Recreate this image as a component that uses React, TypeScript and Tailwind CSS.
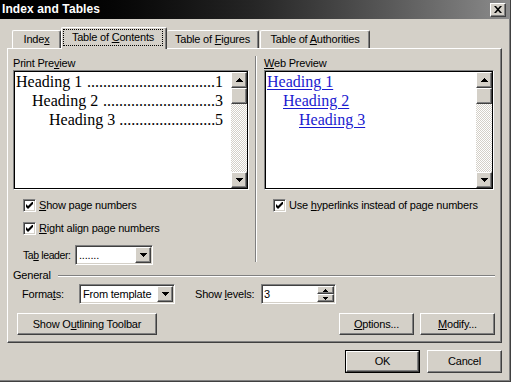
import React from 'react';

const raised =
  'bg-[#d4d0c8] border border-t-white border-l-white border-r-[#404040] border-b-[#404040] shadow-[inset_-1px_-1px_0_#808080]';
const sunken =
  'border border-t-[#808080] border-l-[#808080] border-r-white border-b-white shadow-[inset_1px_1px_0_#404040,inset_-1px_-1px_0_#d4d0c8]';
const frame =
  'border border-t-[#808080] border-l-[#808080] border-r-white border-b-white shadow-[inset_0_0_0_1px_#000]';
const checker = 'bg-[image:repeating-conic-gradient(#ffffff_0_25%,#d4d0c8_0_50%)] bg-[length:2px_2px]';

const Tri = ({ up, small }: { up?: boolean; small?: boolean }) => {
  const w = small ? 5 : 7;
  const h = small ? 3 : 4;
  let d = '';
  if (small) d = up ? 'M2 0h1v1h1v1h1v1h-5v-1h1v-1h1z' : 'M0 0h5v1h-1v1h-1v1h-1v-1h-1v-1h-1z';
  else d = up ? 'M3 0h1v1h1v1h1v1h1v1h-7v-1h1v-1h1v-1h1z' : 'M0 0h7v1h-1v1h-1v1h-1v1h-1v-1h-1v-1h-1v-1h-1z';
  return (
    <svg width={w} height={h} viewBox={`0 0 ${w} ${h}`} className="block" shapeRendering="crispEdges">
      <path d={d} fill="#000" />
    </svg>
  );
};

const ScrollBar = () => (
  <div className="w-[16px] h-full flex flex-col shrink-0">
    <div className={`${raised} h-[16px] flex items-center justify-center`}>
      <Tri up />
    </div>
    <div className={`${raised} h-[16px]`} />
    <div className={`flex-1 ${checker}`} />
    <div className={`${raised} h-[16px] flex items-center justify-center`}>
      <Tri />
    </div>
  </div>
);

const Check = () => (
  <span className={`${sunken} w-[13px] h-[13px] bg-white flex items-center justify-center shrink-0`}>
    <svg width="7" height="7" viewBox="0 0 7 7" className="block">
      <path d="M0 2L2 4L7 -1L7 2L2 7L0 5Z" fill="#000" />
    </svg>
  </span>
);

const CheckRow = ({ children, className = '' }: { children: React.ReactNode; className?: string }) => (
  <div className={`flex items-center h-[13px] ${className}`}>
    <Check />
    <span className="ml-[3px] whitespace-nowrap">{children}</span>
  </div>
);

const Combo = ({ width, value }: { width: string; value: string }) => (
  <div className={`${sunken} ${width} bg-white h-[20px] p-[1px] flex items-center shrink-0`}>
    <span className="flex-1 pl-[2px] whitespace-nowrap overflow-hidden">{value}</span>
    <span className={`${raised} w-[16px] h-full flex items-center justify-center shrink-0`}>
      <Tri />
    </span>
  </div>
);

const Button = ({ width, children }: { width: string; children: React.ReactNode }) => (
  <div className={`${raised} ${width} h-[22px] flex items-center justify-center whitespace-nowrap`}>{children}</div>
);

const TocLine = ({ indent, label, page, dots }: { indent: string; label: string; page: string; dots: number }) => (
  <div className={`flex h-[19px] leading-[19px] ${indent}`}>
    <span className="whitespace-pre">{label} </span>
    <span className="flex-1 min-w-0 text-right whitespace-nowrap">{'.'.repeat(dots)}</span>
    <span>{page}</span>
  </div>
);

const WebLine = ({ indent, label }: { indent: string; label: string }) => (
  <div className={`h-[19px] leading-[19px] ${indent}`}>
    <span className="text-[#1a1ad0] underline underline-offset-[2px]">{label}</span>
  </div>
);

export default function App() {
  return (
    <div className="w-[511px] h-[382px] bg-[#d4d0c8] border-r border-b border-[#404040] shadow-[inset_-1px_-1px_0_#808080] flex flex-col overflow-hidden font-['Liberation_Sans',Arial,sans-serif] text-[11px] leading-[13px] text-black">
      {/* title bar */}
      <div className="h-[19px] shrink-0 flex items-center justify-between bg-linear-to-r from-[#000000] via-[#262626] to-[#8c8c8c] pl-[2px] pr-[4px]">
        <span className="text-white font-bold text-[12px] tracking-[0.1px]">Index and Tables</span>
        <div className={`${raised} w-[16px] h-[14px] flex items-center justify-center`}>
          <svg width="8" height="7" viewBox="0 0 8 7" className="block">
            <path d="M0 0h2l2 2.3 2-2.3h2l-3 3.5 3 3.5h-2l-2-2.3-2 2.3h-2l3-3.5z" fill="#000" />
          </svg>
        </div>
      </div>

      <div className="tracking-[-0.2px] flex flex-col">
        {/* tabs */}
        <div className="mt-[8px] h-[21px] flex items-end">
          <div className="ml-[12px] w-[49px] h-[18px] border-t border-l border-white border-r border-r-[#404040] rounded-t-[2px] shadow-[inset_-1px_0_0_#808080] flex items-center justify-center">
            <span>
              Inde<u>x</u>
            </span>
          </div>
          <div className="relative z-10 -mb-px w-[106px] h-[22px] bg-[#d4d0c8] border-t border-l border-white border-r border-r-[#404040] rounded-t-[2px] shadow-[inset_-1px_0_0_#808080] flex items-start pt-[1px] pl-[1px]">
            <span className="w-[100px] h-[17px] border border-dotted border-black flex items-center justify-center">
              <span>
                Table of <u>C</u>ontents
              </span>
            </span>
          </div>
          <div className="w-[92px] h-[18px] border-t border-white border-r border-r-[#404040] rounded-t-[2px] shadow-[inset_-1px_0_0_#808080] flex items-center justify-center">
            <span>
              Table of <u>F</u>igures
            </span>
          </div>
          <div className="ml-[1px] w-[110px] h-[18px] border-t border-l border-white border-r border-r-[#404040] rounded-t-[2px] shadow-[inset_-1px_0_0_#808080] flex items-center justify-center">
            <span>
              Table of <u>A</u>uthorities
            </span>
          </div>
        </div>

        {/* tab panel */}
        <div className="ml-[7px] w-[495px] h-[295px] border-t border-l border-white border-r border-b border-r-[#404040] border-b-[#404040] shadow-[inset_-1px_-1px_0_#808080] pl-[5px] pr-[5px] pt-[7px] flex flex-col">
          <div className="flex">
            {/* left column */}
            <div className="w-[236px] flex flex-col">
              <div className="h-[14px] leading-[14px]">
                Print Pre<u>v</u>iew
              </div>
              <div className={`${frame} h-[120px] bg-white p-[1px] flex`}>
                <div className="flex-1 min-w-0 pr-[8px] font-['Liberation_Serif','Times_New_Roman',serif] text-[16px] tracking-normal">
                  <TocLine indent="pl-[1px]" label="Heading 1" page="1" dots={32} />
                  <TocLine indent="pl-[17px]" label="Heading 2" page="3" dots={28} />
                  <TocLine indent="pl-[34px]" label="Heading 3" page="5" dots={24} />
                </div>
                <ScrollBar />
              </div>
              <CheckRow className="mt-[9px] ml-[10px]">
                <u>S</u>how page numbers
              </CheckRow>
              <CheckRow className="mt-[10px] ml-[10px]">
                <u>R</u>ight align page numbers
              </CheckRow>
              <div className="mt-[10px] ml-[10px] flex items-center h-[20px]">
                <span className="w-[52px] shrink-0 whitespace-nowrap text-[10.5px] tracking-[-0.4px]">
                  Ta<u>b</u> leader:
                </span>
                <Combo width="w-[78px]" value="......." />
              </div>
            </div>

            {/* separator */}
            <div className="ml-[6px] w-[2px] h-[206px] border-l border-l-[#808080] border-r border-r-white" />

            {/* right column */}
            <div className="ml-[7px] w-[230px] flex flex-col">
              <div className="h-[14px] leading-[14px]">
                <u>W</u>eb Preview
              </div>
              <div className={`${frame} h-[120px] bg-white p-[1px] flex`}>
                <div className="flex-1 min-w-0 font-['Liberation_Serif','Times_New_Roman',serif] text-[16px] tracking-normal">
                  <WebLine indent="pl-[1px]" label="Heading 1" />
                  <WebLine indent="pl-[17px]" label="Heading 2" />
                  <WebLine indent="pl-[33px]" label="Heading 3" />
                </div>
                <ScrollBar />
              </div>
              <CheckRow className="mt-[9px] ml-[9px]">
                Use <u>h</u>yperlinks instead of page numbers
              </CheckRow>
            </div>
          </div>

          {/* General */}
          <div className="mt-[4px] h-[13px] flex items-center">
            <span>General</span>
            <div className="ml-[7px] mr-[1px] flex-1 h-[2px] border-t border-t-[#808080] border-b border-b-white" />
          </div>

          <div className="mt-[2px] h-[20px] flex items-center pl-[9px]">
            <span className="w-[57px] shrink-0 whitespace-nowrap">
              Forma<u>t</u>s:
            </span>
            <Combo width="w-[96px]" value="From template" />
            <span className="ml-[20px] w-[66px] shrink-0 whitespace-nowrap">
              Show <u>l</u>evels:
            </span>
            <div className={`${sunken} w-[75px] h-[20px] bg-white p-[1px] flex items-center`}>
              <span className="flex-1 pl-[1px]">3</span>
              <div className="w-[17px] h-full flex flex-col shrink-0">
                <div className={`${raised} h-[8px] flex items-center justify-center`}>
                  <Tri up small />
                </div>
                <div className={`${raised} h-[8px] flex items-center justify-center`}>
                  <Tri small />
                </div>
              </div>
            </div>
          </div>

          <div className="mt-[9px] flex items-center justify-between pl-[4px] pr-[1px]">
            <Button width="w-[140px]">
              Show O<u>u</u>tlining Toolbar
            </Button>
            <div className="flex gap-[6px]">
              <Button width="w-[75px]">
                <u>O</u>ptions...
              </Button>
              <Button width="w-[75px]">
                <u>M</u>odify...
              </Button>
            </div>
          </div>
        </div>

        {/* OK / Cancel */}
        <div className="mt-[7px] flex justify-end gap-[7px] pr-[8px]">
          <div className="w-[75px] h-[23px] border border-black">
            <div className={`${raised} h-full flex items-center justify-center`}>OK</div>
          </div>
          <div className={`${raised} w-[75px] h-[23px] flex items-center justify-center`}>Cancel</div>
        </div>
      </div>
    </div>
  );
}
